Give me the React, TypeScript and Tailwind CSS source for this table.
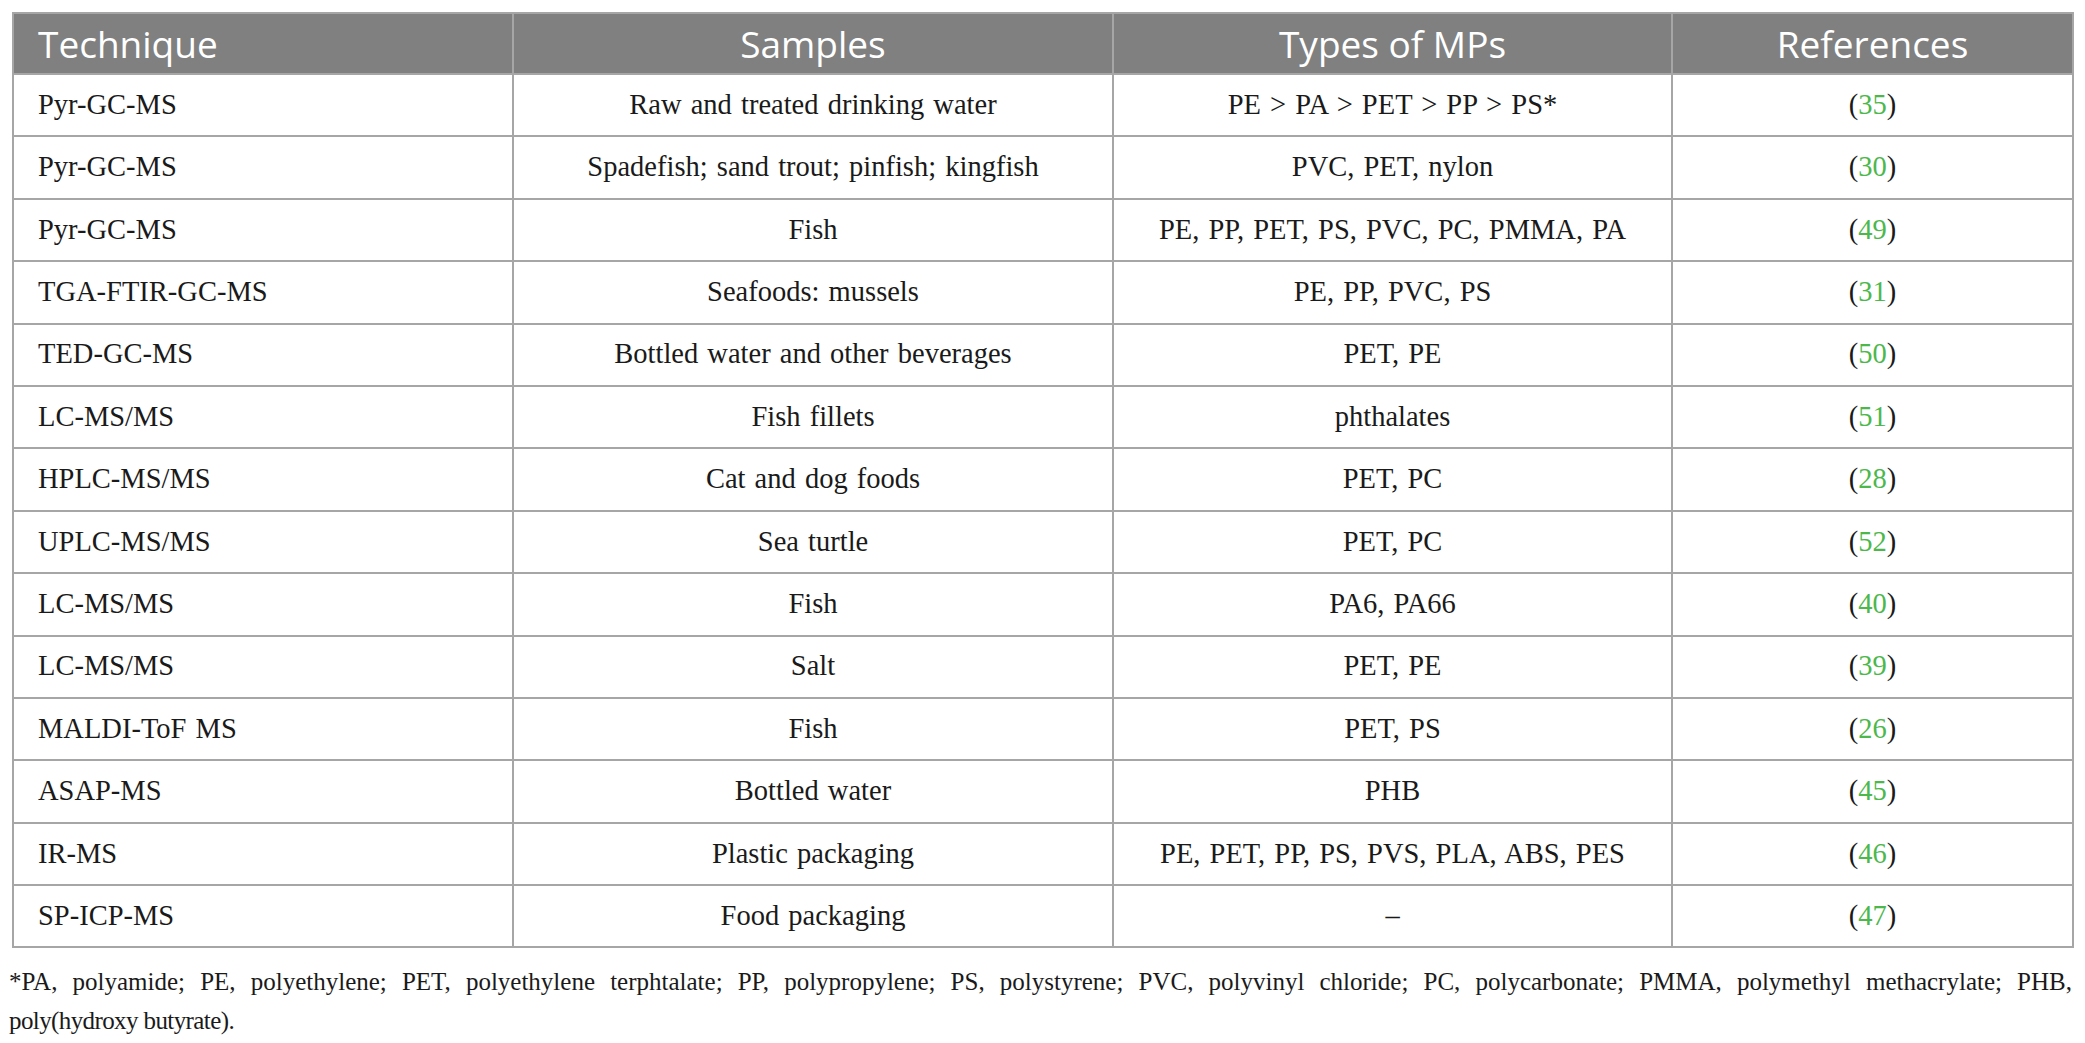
import React from "react";

type Row = {
  technique: string;
  samples: string;
  types: string;
  ref: string;
};

const rows: Row[] = [
  { technique: "Pyr-GC-MS", samples: "Raw and treated drinking water", types: "PE > PA > PET > PP > PS*", ref: "35" },
  { technique: "Pyr-GC-MS", samples: "Spadefish; sand trout; pinfish; kingfish", types: "PVC, PET, nylon", ref: "30" },
  { technique: "Pyr-GC-MS", samples: "Fish", types: "PE, PP, PET, PS, PVC, PC, PMMA, PA", ref: "49" },
  { technique: "TGA-FTIR-GC-MS", samples: "Seafoods: mussels", types: "PE, PP, PVC, PS", ref: "31" },
  { technique: "TED-GC-MS", samples: "Bottled water and other beverages", types: "PET, PE", ref: "50" },
  { technique: "LC-MS/MS", samples: "Fish fillets", types: "phthalates", ref: "51" },
  { technique: "HPLC-MS/MS", samples: "Cat and dog foods", types: "PET, PC", ref: "28" },
  { technique: "UPLC-MS/MS", samples: "Sea turtle", types: "PET, PC", ref: "52" },
  { technique: "LC-MS/MS", samples: "Fish", types: "PA6, PA66", ref: "40" },
  { technique: "LC-MS/MS", samples: "Salt", types: "PET, PE", ref: "39" },
  { technique: "MALDI-ToF MS", samples: "Fish", types: "PET, PS", ref: "26" },
  { technique: "ASAP-MS", samples: "Bottled water", types: "PHB", ref: "45" },
  { technique: "IR-MS", samples: "Plastic packaging", types: "PE, PET, PP, PS, PVS, PLA, ABS, PES", ref: "46" },
  { technique: "SP-ICP-MS", samples: "Food packaging", types: "–", ref: "47" },
];

const App = () => {
  return (
    <div className="w-[2085px] h-[1043px] bg-white pt-[12px] px-[12px] font-['Liberation_Serif',serif] text-[#1a1a1a]">
      {/* Table */}
      <table className="w-[2060px] table-fixed border-collapse border-2 border-[#a6a6a6]">
        <colgroup>
          <col className="w-[500px]" />
          <col className="w-[600px]" />
          <col className="w-[559px]" />
          <col className="w-[401px]" />
        </colgroup>
        <thead>
          <tr className="h-[61px] bg-[#808080] text-white font-['Open_Sans',sans-serif] text-[37px] leading-[50px]">
            <th className="border-2 border-[#a6a6a6] text-left font-normal pl-[24px]">Technique</th>
            <th className="border-2 border-[#a6a6a6] font-normal">Samples</th>
            <th className="border-2 border-[#a6a6a6] font-normal">Types of MPs</th>
            <th className="border-2 border-[#a6a6a6] font-normal">References</th>
          </tr>
        </thead>
        <tbody className="text-[28.5px] [word-spacing:2px]">
          {rows.map((row, i) => (
            <tr key={i} className="h-[62.4px]">
              <td className="border-2 border-[#a6a6a6] pl-[24px]">{row.technique}</td>
              <td className="border-2 border-[#a6a6a6] text-center">{row.samples}</td>
              <td className="border-2 border-[#a6a6a6] text-center">{row.types}</td>
              <td className="border-2 border-[#a6a6a6] text-center">
                (<span className="text-[#4cb84c]">{row.ref}</span>)
              </td>
            </tr>
          ))}
        </tbody>
      </table>

      {/* Footnote */}
      <div className="w-[2063px] -ml-[3px] mt-[14px] text-[25px] leading-[39px]">
        <p className="text-justify [text-align-last:justify]">
          *PA, polyamide; PE, polyethylene; PET, polyethylene terphtalate; PP, polypropylene; PS, polystyrene; PVC,
          polyvinyl chloride; PC, polycarbonate; PMMA, polymethyl methacrylate; PHB,
        </p>
        <p className="tracking-[-0.6px]">poly(hydroxy butyrate).</p>
      </div>
    </div>
  );
};

export default App;
